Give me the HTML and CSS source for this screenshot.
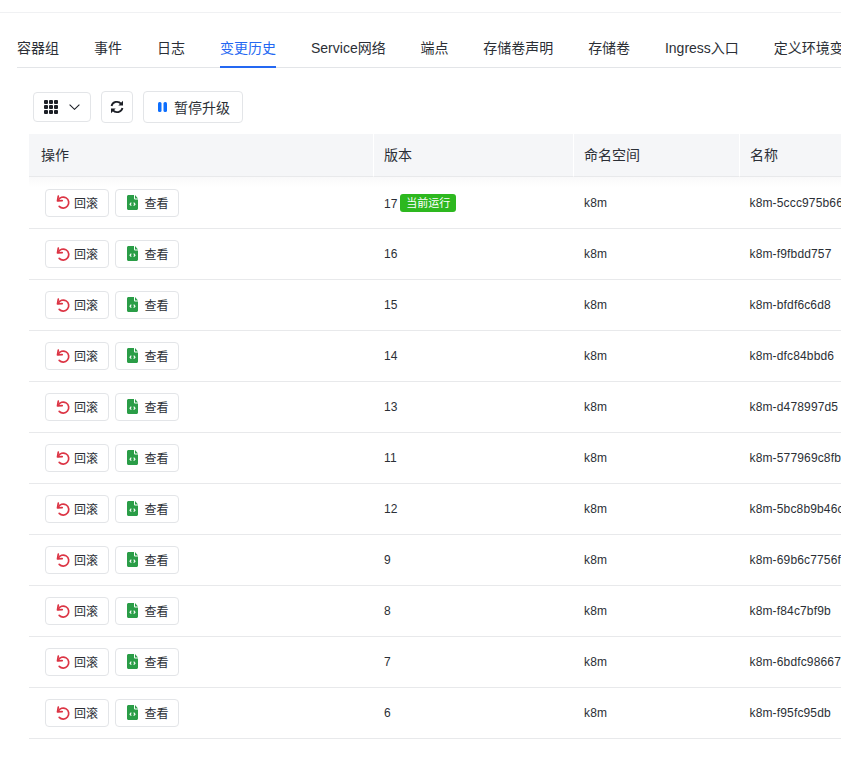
FILE: index.html
```html
<!DOCTYPE html>
<html lang="zh">
<head>
<meta charset="utf-8">
<title>变更历史</title>
<link rel="stylesheet" href="styles.css">
</head>
<body>
<svg class="defs" width="0" height="0" aria-hidden="true">
  <symbol id="undo" viewBox="0 0 14 14"><path d="M2.300 1.200 1.500 5.900l4.700-.3" fill="none" stroke="currentColor" stroke-width="1.700" stroke-linejoin="round" stroke-linecap="round"/><path d="M2.200 5.300A5.500 5.500 0 1 1 3.200 11.300" fill="none" stroke="currentColor" stroke-width="1.700" stroke-linecap="round"/></symbol>
  <symbol id="file" viewBox="0 0 11 15"><path d="M1.500 0H7v3.200c0 .7.6 1.300 1.300 1.300H11V13.500c0 .8-.7 1.500-1.500 1.500h-8C.7 15 0 14.300 0 13.500V1.500C0 .7.7 0 1.500 0Z" fill="currentColor"/><path d="M8 0l3 3.500H8Z" fill="currentColor"/><path d="M4.300 7.700 3 9.200l1.300 1.500M6.700 7.700 8 9.200l-1.300 1.500" fill="none" stroke="#fff" stroke-width="1.100"/></symbol>
</svg>
<div class="topbar"></div>
<nav class="tabs">
  <a class="tab">容器组</a>
  <a class="tab">事件</a>
  <a class="tab">日志</a>
  <a class="tab active">变更历史</a>
  <a class="tab">Service网络</a>
  <a class="tab">端点</a>
  <a class="tab">存储卷声明</a>
  <a class="tab">存储卷</a>
  <a class="tab">Ingress入口</a>
  <a class="tab">定义环境变量</a>
</nav>
<div class="toolbar">
  <button class="tbtn grid-btn">
    <svg class="grid-icon" viewBox="0 0 14 14" width="14" height="14"><g fill="#1c1f26"><rect x="0" y="0" width="4" height="4" rx="1"/><rect x="5" y="0" width="4" height="4" rx="1"/><rect x="10" y="0" width="4" height="4" rx="1"/><rect x="0" y="5" width="4" height="4" rx="1"/><rect x="5" y="5" width="4" height="4" rx="1"/><rect x="10" y="5" width="4" height="4" rx="1"/><rect x="0" y="10" width="4" height="4" rx="1"/><rect x="5" y="10" width="4" height="4" rx="1"/><rect x="10" y="10" width="4" height="4" rx="1"/></g></svg>
    <svg class="chev" viewBox="0 0 11 6" width="11" height="6"><path d="M.6.6 5.500 5.300 10.400.6" fill="none" stroke="#1c1f26" stroke-width="1.100"/></svg>
  </button>
  <button class="tbtn refresh-btn">
    <svg viewBox="0 0 14 14" width="14" height="14"><g fill="none" stroke="#1c1f26" stroke-width="1.800"><path d="M1.500 6A5.600 5.600 0 0 1 11.200 3.800"/><path d="M12.500 8A5.600 5.600 0 0 1 2.800 10.200"/></g><path d="M13 .8v4.700H8.300Z" fill="#1c1f26"/><path d="M1 13.200V8.500h4.700Z" fill="#1c1f26"/></svg>
  </button>
  <button class="tbtn pause-btn">
    <svg viewBox="0 0 9 10" width="9" height="10"><rect x="0" y="0" width="3.500" height="10" rx="1.500" fill="#0d6efd"/><rect x="5.500" y="0" width="3.500" height="10" rx="1.500" fill="#0d6efd"/></svg>
    <span>暂停升级</span>
  </button>
</div>
<div class="table-wrap">
<table class="history">
  <colgroup><col class="c-op"><col class="c-ver"><col class="c-ns"><col class="c-name"></colgroup>
  <thead>
    <tr><th>操作</th><th>版本</th><th>命名空间</th><th>名称</th></tr>
  </thead>
  <tbody id="rows">
    <tr class="first"><td><div class="ops"><button class="act"><svg class="i-undo"><use href="#undo"/></svg>回滚</button><button class="act"><svg class="i-file"><use href="#file"/></svg>查看</button></div></td><td>17 <span class="badge">当前运行</span></td><td>k8m</td><td>k8m-5ccc975b66</td></tr>
    <tr><td><div class="ops"><button class="act"><svg class="i-undo"><use href="#undo"/></svg>回滚</button><button class="act"><svg class="i-file"><use href="#file"/></svg>查看</button></div></td><td>16</td><td>k8m</td><td>k8m-f9fbdd757</td></tr>
    <tr><td><div class="ops"><button class="act"><svg class="i-undo"><use href="#undo"/></svg>回滚</button><button class="act"><svg class="i-file"><use href="#file"/></svg>查看</button></div></td><td>15</td><td>k8m</td><td>k8m-bfdf6c6d8</td></tr>
    <tr><td><div class="ops"><button class="act"><svg class="i-undo"><use href="#undo"/></svg>回滚</button><button class="act"><svg class="i-file"><use href="#file"/></svg>查看</button></div></td><td>14</td><td>k8m</td><td>k8m-dfc84bbd6</td></tr>
    <tr><td><div class="ops"><button class="act"><svg class="i-undo"><use href="#undo"/></svg>回滚</button><button class="act"><svg class="i-file"><use href="#file"/></svg>查看</button></div></td><td>13</td><td>k8m</td><td>k8m-d478997d5</td></tr>
    <tr><td><div class="ops"><button class="act"><svg class="i-undo"><use href="#undo"/></svg>回滚</button><button class="act"><svg class="i-file"><use href="#file"/></svg>查看</button></div></td><td>11</td><td>k8m</td><td>k8m-577969c8fb</td></tr>
    <tr><td><div class="ops"><button class="act"><svg class="i-undo"><use href="#undo"/></svg>回滚</button><button class="act"><svg class="i-file"><use href="#file"/></svg>查看</button></div></td><td>12</td><td>k8m</td><td>k8m-5bc8b9b46c</td></tr>
    <tr><td><div class="ops"><button class="act"><svg class="i-undo"><use href="#undo"/></svg>回滚</button><button class="act"><svg class="i-file"><use href="#file"/></svg>查看</button></div></td><td>9</td><td>k8m</td><td>k8m-69b6c7756f</td></tr>
    <tr><td><div class="ops"><button class="act"><svg class="i-undo"><use href="#undo"/></svg>回滚</button><button class="act"><svg class="i-file"><use href="#file"/></svg>查看</button></div></td><td>8</td><td>k8m</td><td>k8m-f84c7bf9b</td></tr>
    <tr><td><div class="ops"><button class="act"><svg class="i-undo"><use href="#undo"/></svg>回滚</button><button class="act"><svg class="i-file"><use href="#file"/></svg>查看</button></div></td><td>7</td><td>k8m</td><td>k8m-6bdfc98667</td></tr>
    <tr><td><div class="ops"><button class="act"><svg class="i-undo"><use href="#undo"/></svg>回滚</button><button class="act"><svg class="i-file"><use href="#file"/></svg>查看</button></div></td><td>6</td><td>k8m</td><td>k8m-f95fc95db</td></tr>
  </tbody>
</table>
</div>
</body>
</html>
```

FILE: styles.css
```css
* { box-sizing: border-box; }
html, body { margin: 0; padding: 0; background: #fff; }
body {
  width: 841px;
  height: 761px;
  overflow: hidden;
  font-family: "Liberation Sans", "Noto Sans CJK SC", sans-serif;
  color: #1f2329;
}
.defs { display: block; height: 0; }
.topbar { height: 13px; border-bottom: 1px solid #f0f1f3; }
.tabs {
  display: flex;
  gap: 35px;
  height: 55px;
  margin-left: 17px;
  border-bottom: 1px solid #e3e5e8;
  white-space: nowrap;
  font-size: 14px;
}
.tab {
  flex: none;
  height: 55px;
  padding-top: 25px;
  line-height: 20px;
  color: #2b2f36;
}
.tab:nth-child(n+6) { margin-left: -0.200px; }
.tab.active {
  color: #2468f2;
  border-bottom: 2px solid #2468f2;
}
.toolbar {
  display: flex;
  align-items: center;
  gap: 10px;
  margin: 23px 0 11px 33px;
}
button { font: inherit; color: inherit; background: #fff; padding: 0; cursor: pointer; }
.tbtn {
  display: flex;
  align-items: center;
  justify-content: center;
  height: 32px;
  border: 1px solid #e3e5e8;
  border-radius: 4px;
  font-size: 14px;
}
.grid-btn { width: 58px; height: 30px; gap: 11px; }
.refresh-btn { width: 32px; }
.pause-btn { width: 100px; gap: 7px; padding-left: 2px; color: #2b2f36; }
.table-wrap { margin-left: 29px; overflow: hidden; }
.history {
  width: 812px;
  table-layout: fixed;
  border-collapse: separate;
  border-spacing: 0;
  font-size: 12px;
}
.c-op { width: 345px; }
.c-ver { width: 200px; }
.c-ns { width: 166px; }
.c-name { width: 101px; }
th {
  height: 43px;
  padding: 0 0 2px 10px;
  background: #f5f6f8;
  border-bottom: 1px solid #e8e9eb;
  border-right: 1px solid #fff;
  text-align: left;
  font-size: 14px;
  font-weight: 400;
  color: #2b2f36;
}
th:first-child { padding-left: 12px; }
th:last-child { border-right: 0; }
td {
  height: 51px;
  padding: 0 0 0 10px;
  border-bottom: 1px solid #e8e9eb;
  white-space: nowrap;
  overflow: hidden;
  color: #2b2f36;
  letter-spacing: 0.15px;
}
td:last-child { padding-left: 9.500px; }
.first td { height: 52px; background: linear-gradient(#f9f9fa, #fff 10px); }
.ops { display: flex; gap: 6px; padding-left: 6px; }
.act {
  display: flex;
  align-items: center;
  justify-content: center;
  gap: 4px;
  width: 64px;
  height: 28px;
  padding-bottom: 1px;
  border: 1px solid #e3e5e8;
  border-radius: 4px;
  font-size: 12px;
  letter-spacing: 0;
  color: #2b2f36;
}
.i-undo { width: 14px; height: 14px; color: #dc3545; }
.i-file { width: 11px; height: 15px; margin: 0 2px 0 2px; color: #2a9d47; }
.badge {
  display: inline-block;
  height: 18px;
  padding: 0 6px;
  margin-left: -1px;
  line-height: 18px;
  font-size: 11px;
  letter-spacing: 0;
  color: #fff;
  background: #2db81f;
  border-radius: 3px;
  vertical-align: 1px;
}
```
